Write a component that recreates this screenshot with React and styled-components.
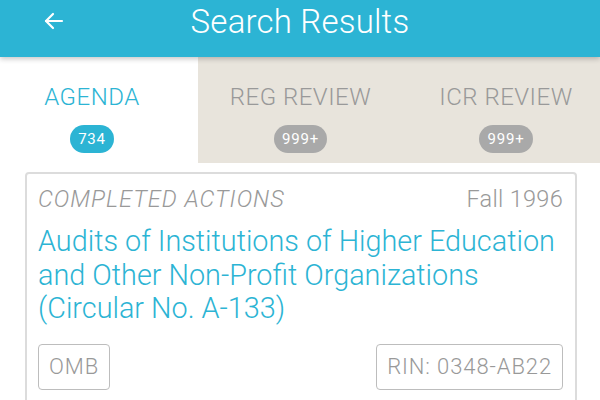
import React from 'react';
import styled, { createGlobalStyle } from 'styled-components';

const Global = createGlobalStyle`
  html, body { margin: 0; padding: 0; background: #fff; }
  body { font-family: Roboto, "Liberation Sans", sans-serif; }
`;

const BLUE = '#2cb4d4';

const Page = styled.div`
  width: 600px;
  height: 400px;
  overflow: hidden;
  background: #fff;
`;

const Header = styled.header`
  position: relative;
  z-index: 2;
  height: 57px;
  background: ${BLUE};
  box-shadow: 0 2px 5px rgba(0, 0, 0, 0.22);
  display: flex;
  align-items: center;
  justify-content: center;
`;

const Back = styled.button`
  position: absolute;
  left: 42px;
  top: 9px;
  width: 24px;
  height: 24px;
  padding: 0;
  border: 0;
  background: none;
  color: #fff;
`;

const Title = styled.h1`
  margin: 0 0 15px;
  color: #fff;
  font-size: 33px;
  font-weight: 300;
  letter-spacing: 0.2px;
`;

const Tabs = styled.nav`
  display: grid;
  grid-template-columns: 198px 205px 1fr;
  height: 106px;
  background: #e8e4dc;
`;

const Tab = styled.div`
  display: flex;
  flex-direction: column;
  align-items: center;
  padding-top: 26px;
  padding-left: ${p => p.$shift > 0 ? p.$shift : 0}px;
  padding-right: ${p => p.$shift < 0 ? -p.$shift : 0}px;
  background: ${p => p.$active ? '#fff' : 'transparent'};
`;

const TabLabel = styled.span`
  font-size: 24px;
  font-weight: 300;
  line-height: 28px;
  letter-spacing: 0.5px;
  color: ${p => p.$active ? BLUE : '#999'};
`;

const Badge = styled.span`
  margin-top: 14px;
  height: 28px;
  min-width: 42px;
  padding: 0 8px;
  box-sizing: border-box;
  border-radius: 14px;
  background: ${p => p.$active ? BLUE : '#a9a9a9'};
  color: #fff;
  font-size: 15px;
  line-height: 28px;
  text-align: center;
  letter-spacing: 0.8px;
`;

const Body = styled.main`
  padding: 9px 23px 0 25px;
`;

const Card = styled.article`
  border: 2px solid #dcdcdc;
  border-radius: 4px;
  padding: 10px 12px 20px 11px;
`;

const Meta = styled.div`
  display: flex;
  justify-content: space-between;
  align-items: baseline;
  color: #999;
  font-size: 23.5px;
  font-weight: 300;
  line-height: 30px;
  letter-spacing: 0.3px;
`;

const Status = styled.span`
  font-style: italic;
  letter-spacing: 1px;
`;

const Headline = styled.h2`
  margin: 11px 0 0;
  color: ${BLUE};
  font-size: 28.8px;
  font-weight: 300;
  line-height: 33.5px;
`;

const Tags = styled.div`
  display: flex;
  justify-content: space-between;
  margin-top: 18px;
`;

const Tag = styled.span`
  border: 1.5px solid #bdbdbd;
  border-radius: 4px;
  padding: 0 10px;
  height: 44px;
  line-height: 44px;
  color: #999;
  font-size: 22px;
  font-weight: 300;
  letter-spacing: 0.9px;
`;

const tabs = [
  { label: 'AGENDA', count: '734', active: true, shift: -14 },
  { label: 'REG REVIEW', count: '999+', shift: 0 },
  { label: 'ICR REVIEW', count: '999+', shift: 9 },
];

export default function App() {
  return (
    <Page>
      <Global />
      <Header>
        <Back aria-label="Back">
          <svg width="24" height="24" viewBox="0 0 24 24" fill="none" stroke="currentColor" strokeWidth="2.2" strokeLinecap="round" strokeLinejoin="round">
            <path d="M20 12H4" />
            <path d="M11 5l-7 7 7 7" />
          </svg>
        </Back>
        <Title>Search Results</Title>
      </Header>
      <Tabs>
        {tabs.map(t => (
          <Tab key={t.label} $active={t.active} $shift={t.shift}>
            <TabLabel $active={t.active}>{t.label}</TabLabel>
            <Badge $active={t.active}>{t.count}</Badge>
          </Tab>
        ))}
      </Tabs>
      <Body>
        <Card>
          <Meta>
            <Status>COMPLETED ACTIONS</Status>
            <span>Fall 1996</span>
          </Meta>
          <Headline>
            Audits of Institutions of Higher Education and Other Non-Profit Organizations (Circular No. A-133)
          </Headline>
          <Tags>
            <Tag>OMB</Tag>
            <Tag>RIN: 0348-AB22</Tag>
          </Tags>
        </Card>
      </Body>
    </Page>
  );
}
